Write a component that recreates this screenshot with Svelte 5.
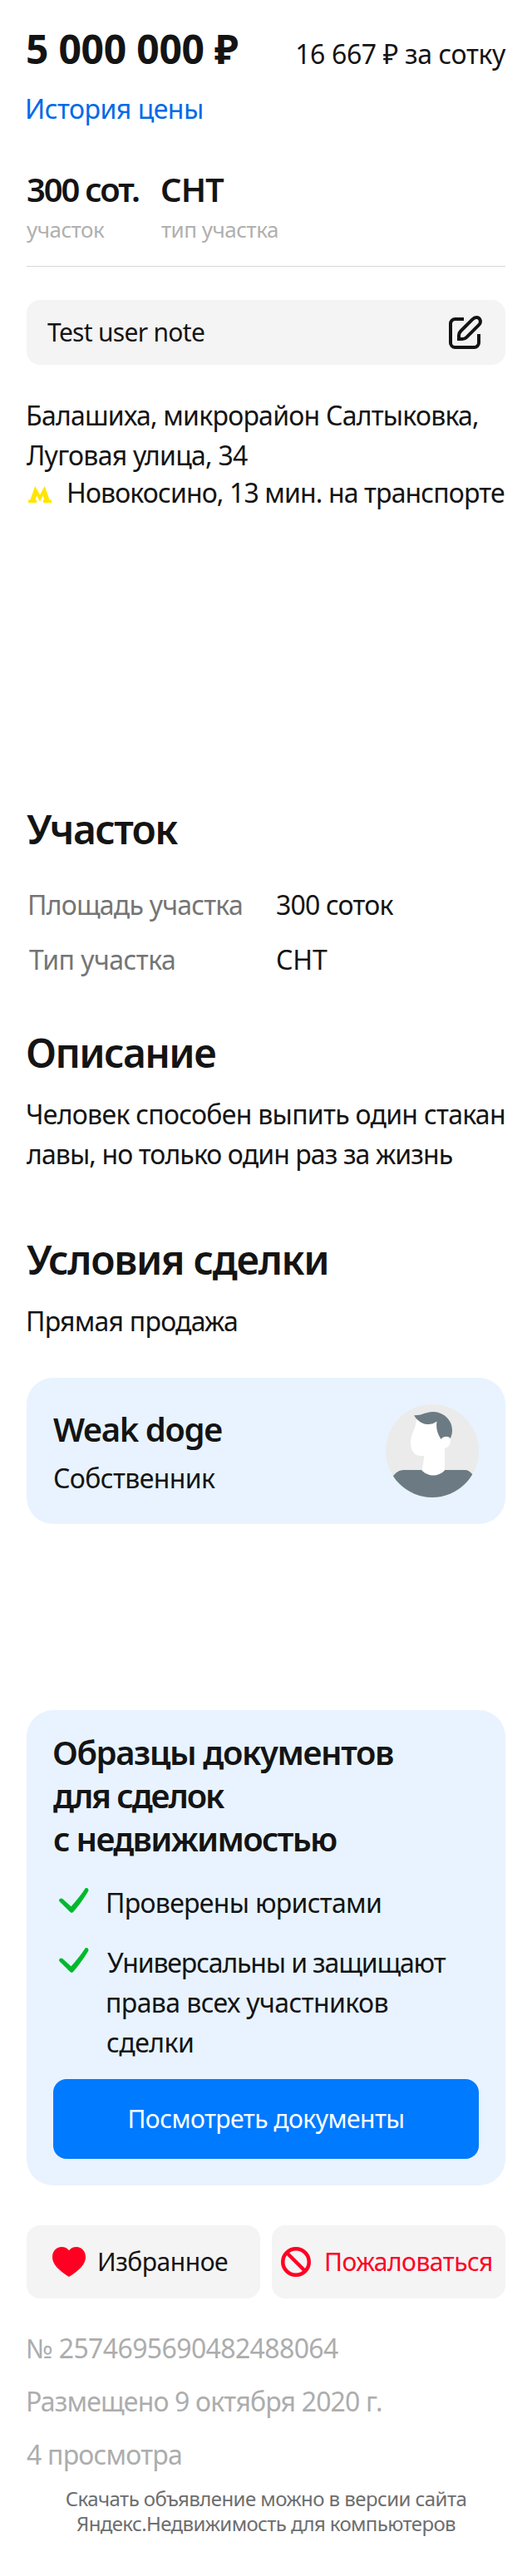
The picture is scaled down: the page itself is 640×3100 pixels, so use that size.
<script>
  const stats = [
    { value: '300 сот.', label: 'участок', kind: 'area' },
    { value: 'СНТ', label: 'тип участка', kind: 'type' }
  ];
</script>

{#snippet check()}
  <svg class="check" width="36" height="30" viewBox="0 0 36 30" aria-hidden="true">
    <path d="M.8 13.2c1.100-1.100 2.500-1.100 3.700.1L14.500 22.200C20.500 15.600 26.300 8.400 30.900 1.400c.8-1.300 2.300-1.700 3.500-.9 1.100.8 1.400 2.300.7 3.600C30 12.600 23.700 21.500 17 29.100c-.9 1.100-2.600 1.100-3.600 0L.8 16.600c-1-1-1-2.400 0-3.400z" fill="#00b92d" />
  </svg>
{/snippet}

<main class="page">
  <div class="price-row">
    <div class="price">5 000 000 ₽</div>
    <div class="per-unit">16 667 ₽ за сотку</div>
  </div>
  <a class="history" href="#history">История цены</a>

  <div class="stats">
    {#each stats as s}
      <div class="stat {s.kind}">
        <div class="value">{s.value}</div>
        <div class="label">{s.label}</div>
      </div>
    {/each}
  </div>

  <div class="note">
    <span>Test user note</span>
    <svg width="40" height="40" viewBox="0 0 40 40" fill="none" stroke="#141414" stroke-width="4" aria-hidden="true">
      <path d="M18 4H7.500A5.500 5.500 0 0 0 2 9.500v23A5.500 5.500 0 0 0 7.500 38h23a5.500 5.500 0 0 0 5.500-5.500V22" />
      <path d="M12 28v-4.500c0-2 .7-3.500 2.200-5L28.300 4.300c3.200-3.200 7.500-2.700 9 .2 1 2 .6 4.700-1.300 6.600L21.300 25.800c-1.500 1.500-3 2.200-5 2.200z" />
    </svg>
  </div>

  <div class="address">
    <div class="line a1">Балашиха, микрорайон Салтыковка,</div>
    <div class="line a2">Луговая улица, 34</div>
    <div class="metro">
      <svg width="28" height="20" viewBox="0 0 28 20" aria-hidden="true">
        <path d="M8.200 0 2.400 16.600H0V20h10v-3.400H8.500l1.700-5L14 18.400l3.800-6.800 1.700 5H18V20h10v-3.400h-2.400L19.800 0 14 10.400z" fill="#ffe500" />
      </svg>
      <span>Новокосино, 13 мин. на транспорте</span>
    </div>
  </div>

  <h2 class="h-plot">Участок</h2>
  <div class="features">
    <div class="key k1">Площадь участка</div>
    <div class="val v1">300 соток</div>
    <div class="key k2">Тип участка</div>
    <div class="val v2">СНТ</div>
  </div>

  <h2 class="h-about">Описание</h2>
  <div class="about">
    <div class="line d1">Человек способен выпить один стакан</div>
    <div class="line d2">лавы, но только один раз за жизнь</div>
  </div>

  <h2 class="h-terms">Условия сделки</h2>
  <div class="terms line">Прямая продажа</div>

  <section class="card owner">
    <div>
      <div class="name">Weak doge</div>
      <div class="role">Собственник</div>
    </div>
    <svg width="112" height="112" viewBox="0 0 112 112" aria-hidden="true">
      <defs><clipPath id="face"><circle cx="56" cy="56" r="56" /></clipPath></defs>
      <g clip-path="url(#face)">
        <path d="M0 0h112v112H0z" fill="#ebebeb" />
        <path d="M0 120V94l9.500-8.500C13.500 81 17 79 23 79h72c4 0 7 2 9.500 5.500L112 92v28z" fill="#6c7b83" />
        <path d="M37 19c-1 6-2 10-4.500 15-2 5-2.500 8-2.500 12 0 10 5 16 12 16h4.500L43.500 79.500C51 87.500 63 87.500 71 79.500V53c5-1.500 7-5.500 7-10L73 20 56 12z" fill="#fff" />
        <path d="M34 13.200C44 13.500 48 9 57.500 9 70 9.500 80 19 80 31c0 4-.8 7-2.300 10-2.200-3.200-8.200-3.200-11.200 1C62 35 60.200 29 61.500 20.500 53.500 26.500 41.500 25.500 34 13.200z" fill="#6c7b83" />
      </g>
    </svg>
  </section>

  <section class="card docs">
    <div class="title t1">Образцы документов</div>
    <div class="title t2">для сделок</div>
    <div class="title t3">с недвижимостью</div>
    <ul>
      <li>
        {@render check()}
        <div class="line i1">Проверены юристами</div>
      </li>
      <li>
        {@render check()}
        <div>
          <div class="line i2">Универсальны и защищают</div>
          <div class="line i3">права всех участников</div>
          <div class="line i4">сделки</div>
        </div>
      </li>
    </ul>
    <button class="primary">Посмотреть документы</button>
  </section>

  <div class="actions">
    <button class="fav">
      <svg width="40" height="36" viewBox="0 0 40 36" aria-hidden="true">
        <path d="M20 36C7 27.500 0 21 0 12 0 5 4.800 0 11 0c4 0 7 1.500 9 4.300C22 1.500 25 0 29 0c6.200 0 11 5 11 12 0 9-7 15.500-20 24z" fill="#ff0022" />
      </svg>
      <span>Избранное</span>
    </button>
    <button class="report">
      <svg width="36" height="36" viewBox="0 0 36 36" fill="none" stroke="#ff0022" stroke-width="4.500" aria-hidden="true">
        <circle cx="18" cy="18" r="15.750" />
        <path d="M7 7l22 22" />
      </svg>
      <span>Пожаловаться</span>
    </button>
  </div>

  <div class="meta m1">№ 2574695690482488064</div>
  <div class="meta m2">Размещено 9 октября 2020 г.</div>
  <div class="meta m3">4 просмотра</div>

  <footer>
    <div class="f1">Скачать объявление можно в версии сайта</div>
    <div class="f2">Яндекс.Недвижимость для компьютеров</div>
  </footer>
</main>

<style>
  :global(body) { background: #fff; }
  .page {
    box-sizing: border-box;
    width: 640px;
    height: 3100px;
    padding: 31px 32px 0;
    overflow: hidden;
    color: #141414;
    font: 400 32px/48px "Noto Sans", "Open Sans", sans-serif;
    white-space: nowrap;
  }
  .price-row { display: flex; justify-content: space-between; align-items: baseline; height: 56px; }
  .price { font-size: 48px; line-height: 56px; font-weight: 700; letter-spacing: -.26px; text-indent: -1px; }
  .per-unit { letter-spacing: -.37px; }
  .history { display: block; margin-top: 20px; color: #006ae8; text-decoration: none; letter-spacing: -.5px; text-indent: -2px; }

  .stats { display: flex; margin-top: 49px; padding-bottom: 28px; border-bottom: 1px solid #d6d6d6; }
  .stat.area { width: 162px; }
  .value { font-size: 40px; font-weight: 600; }
  .label { font-size: 26px; line-height: 32px; margin-top: 8px; color: #b0b0b0; }
  .area .value { letter-spacing: -2.17px; }
  .type .value { letter-spacing: -1.06px; text-indent: -1px; }
  .area .label { letter-spacing: -.52px; }
  .type .label { letter-spacing: -.5px; }

  .note {
    display: flex;
    justify-content: space-between;
    align-items: center;
    box-sizing: border-box;
    height: 78px;
    margin-top: 40px;
    padding: 0 28px 0 25px;
    border-radius: 16px;
    background: #f4f4f4;
    font-size: 30px;
    letter-spacing: -.7px;
  }

  .address { margin-top: 37px; }
  .a1 { letter-spacing: -.76px; text-indent: -1px; }
  .a2 { letter-spacing: -.74px; }
  .metro { display: flex; line-height: 42px; letter-spacing: -.87px; }
  .metro svg { flex: none; margin: 13px 18px 0 2px; }

  h2 { margin: 0; font-size: 48px; line-height: 56px; font-weight: 600; }
  .h-plot { margin-top: 356px; letter-spacing: -1.63px; }
  .h-about { margin-top: 51px; letter-spacing: -1.6px; text-indent: -1px; }
  .h-terms { margin-top: 75px; letter-spacing: -1.29px; }

  .features { display: grid; grid-template-columns: 300px 1fr; grid-auto-rows: 66px; margin-top: 30px; line-height: 66px; }
  .key { color: #757575; text-indent: 1px; }
  .k1 { letter-spacing: -.78px; }
  .k2 { letter-spacing: -.54px; text-indent: 3px; }
  .v1 { letter-spacing: -.82px; }
  .v2 { letter-spacing: -.13px; }

  .about { margin-top: 22px; }
  .d1 { letter-spacing: -.71px; text-indent: -1px; }
  .d2 { letter-spacing: -.9px; }
  .terms { margin-top: 22px; letter-spacing: -.77px; text-indent: -1px; }

  .card { box-sizing: border-box; border-radius: 32px; background: #e8f3ff; }
  .owner { display: flex; justify-content: space-between; height: 176px; margin-top: 44px; padding: 32px; }
  .name { margin-top: 6px; font-size: 40px; font-weight: 600; letter-spacing: -1.47px; }
  .role { margin-top: 11px; letter-spacing: -.61px; }

  .docs { height: 572px; margin-top: 224px; padding: 25px 32px 0; }
  .title { font-size: 40px; line-height: 52px; font-weight: 600; }
  .t1 { letter-spacing: -1.39px; text-indent: -1px; }
  .t2 { letter-spacing: -2.08px; }
  .t3 { letter-spacing: -1.69px; }
  ul { display: grid; gap: 24px; margin: 27px 0 20px; padding: 0; list-style: none; }
  li { display: flex; }
  .check { flex: none; margin: 6px 21px 0 7px; }
  .i1 { letter-spacing: -.7px; text-indent: -1px; }
  .i2 { letter-spacing: -1.15px; text-indent: 1px; }
  .i3 { letter-spacing: -.6px; text-indent: -1px; }
  .i4 { letter-spacing: -.52px; }

  button { display: flex; align-items: center; padding: 0; border: 0; border-radius: 16px; color: inherit; font: inherit; font-size: 30px; }
  .primary { justify-content: center; width: 512px; height: 96px; background: #007aff; color: #fff; letter-spacing: -.52px; }

  .actions { display: grid; grid-template-columns: 281px 281px; gap: 14px; height: 88px; margin-top: 48px; }
  .fav, .report { background: #f4f4f4; }
  .fav { padding-left: 31px; gap: 14px; letter-spacing: -.48px; }
  .report { padding-left: 11px; gap: 16px; color: #ff0022; letter-spacing: -.51px; }

  .meta { line-height: 64px; color: #adadad; }
  .m1 { margin-top: 28px; letter-spacing: -.62px; text-indent: -1px; }
  .m2 { letter-spacing: -.84px; text-indent: -1px; }
  .m3 { letter-spacing: -.79px; }

  footer { margin-top: 6px; font-size: 24px; line-height: 30px; text-align: center; color: #6e6e6e; }
  .f1 { letter-spacing: -.56px; }
  .f2 { letter-spacing: -.62px; }
</style>
